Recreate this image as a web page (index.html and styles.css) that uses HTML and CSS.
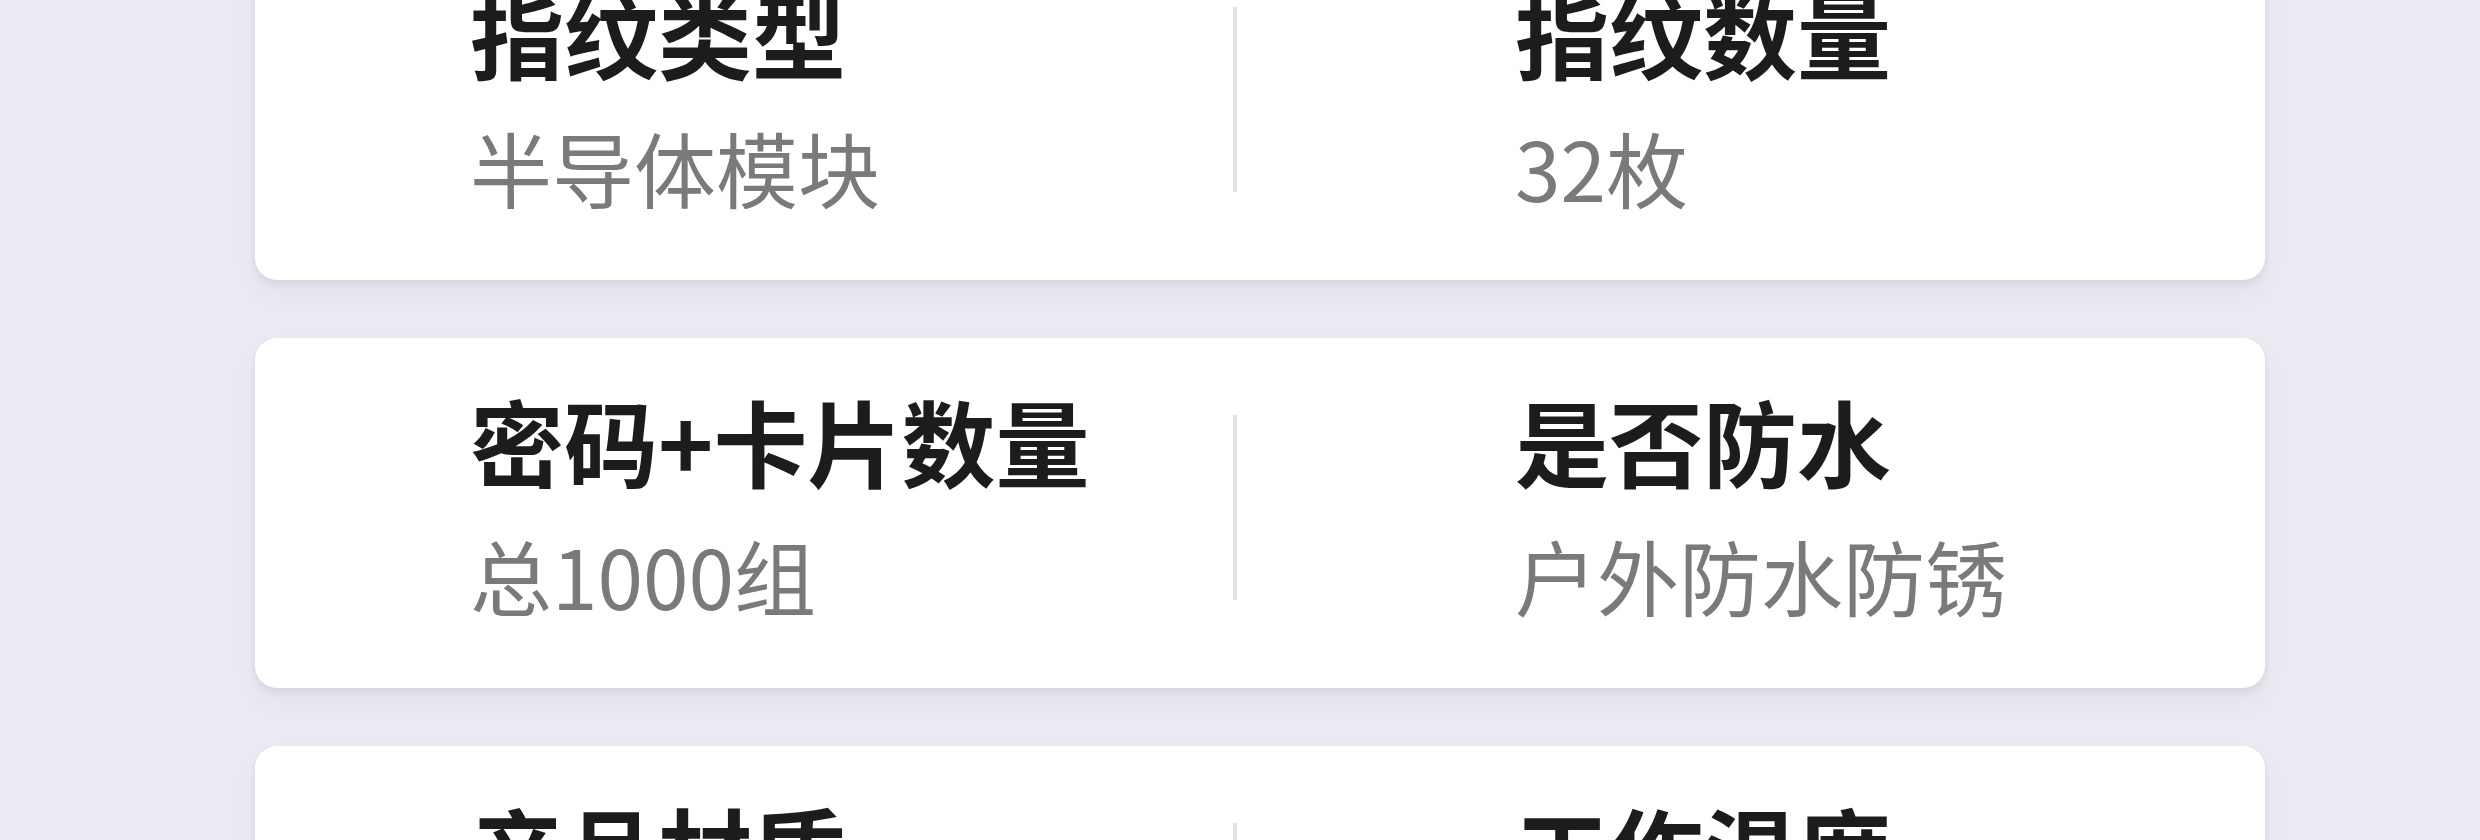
FILE: index.html
```html
<!DOCTYPE html>
<html lang="zh-CN">
<head>
<meta charset="utf-8">
<title>产品参数</title>
<link rel="stylesheet" href="styles.css">
</head>
<body>
<main class="spec-list">
  <section class="spec-card">
    <div class="spec-col spec-col-left">
      <div class="spec-title">指纹类型</div>
      <div class="spec-value">半导体模块</div>
    </div>
    <div class="spec-divider"></div>
    <div class="spec-col spec-col-right">
      <div class="spec-title">指纹数量</div>
      <div class="spec-value">32枚</div>
    </div>
  </section>
  <section class="spec-card">
    <div class="spec-col spec-col-left">
      <div class="spec-title">密码+卡片数量</div>
      <div class="spec-value">总1000组</div>
    </div>
    <div class="spec-divider"></div>
    <div class="spec-col spec-col-right">
      <div class="spec-title">是否防水</div>
      <div class="spec-value">户外防水防锈</div>
    </div>
  </section>
  <section class="spec-card">
    <div class="spec-col spec-col-left">
      <div class="spec-title">产品材质</div>
      <div class="spec-value">锌合金</div>
    </div>
    <div class="spec-divider"></div>
    <div class="spec-col spec-col-right">
      <div class="spec-title">工作温度</div>
      <div class="spec-value">-25℃~70℃</div>
    </div>
  </section>
</main>
</body>
</html>
```

FILE: styles.css
```css
html, body {
  margin: 0;
  padding: 0;
  overflow: hidden;
  background: #ecebf3;
}

body {
  font-family: "Noto Sans CJK SC", "Noto Sans", sans-serif;
}

.spec-list {
  display: flex;
  flex-direction: column;
  gap: 58px;
  margin-top: -70px;
  padding-left: 255px;
  padding-right: 215px;
}

.spec-card {
  display: flex;
  align-items: flex-start;
  box-sizing: border-box;
  height: 350px;
  padding: 47px 0 0 215px;
  background: #ffffff;
  border-radius: 22px;
  box-shadow: 0 4px 6px rgba(70, 70, 100, 0.09), 0 12px 30px rgba(70, 70, 110, 0.06);
}

.spec-col {
  display: flex;
  flex-direction: column;
  gap: 32px;
}

.spec-col-left {
  flex: 0 0 763px;
}

.spec-col-right {
  flex: 1 1 auto;
  padding-left: 278px;
}

.spec-title {
  font-size: 94px;
  line-height: 110px;
  font-weight: 700;
  color: #1c1c1c;
  white-space: nowrap;
}

.spec-value {
  font-size: 82px;
  line-height: 96px;
  font-weight: 400;
  color: #7a7a7a;
  white-space: nowrap;
}

.spec-divider {
  flex: 0 0 4px;
  height: 185px;
  margin-top: 30px;
  background: #e4e4e6;
}
```
